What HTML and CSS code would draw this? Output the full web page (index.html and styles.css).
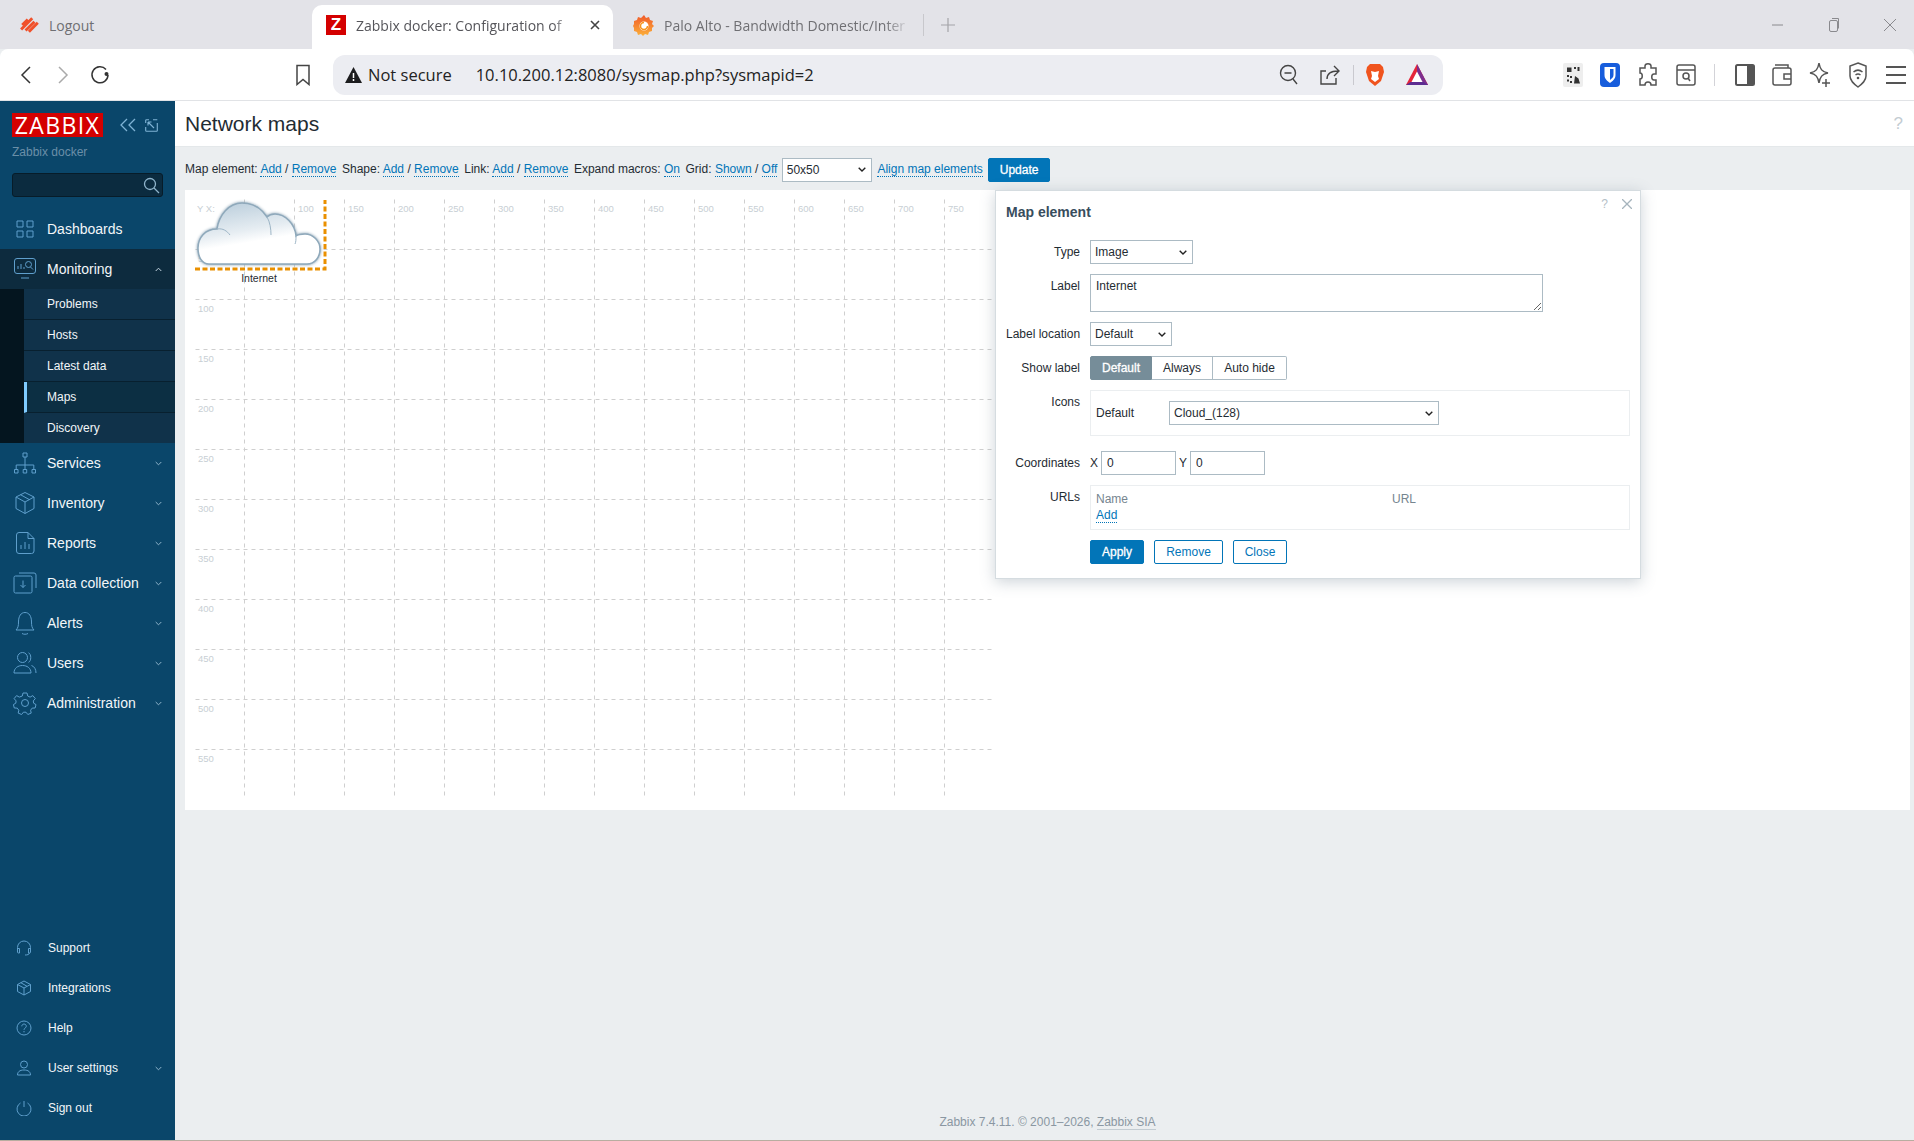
FILE: index.html
```html
<!DOCTYPE html>
<html lang="en">

<head>
  <meta charset="UTF-8" />
  <title>Zabbix docker: Configuration of network maps</title>
  <link rel="stylesheet" href="styles.css">
</head>

<body>
  <div class="tabbar">
    <div class="tab">
      <svg class="tab-icon" width="20" height="20" viewBox="0 0 18 18"><path d="M2 9l5-5M1 13l10-10M5 14l8-8M8 15l8-8" fill="none" stroke="#f0512b" stroke-width="2.6"/></svg>
      <span class="tab-text">Logout</span>
    </div>
    <div class="tab tab-active">
      <span class="tab-z">Z</span>
      <span class="tab-text fade">Zabbix docker: Configuration of</span>
      <svg class="tab-close" width="12" height="12" viewBox="0 0 12 12"><path d="M2 2l8 8M10 2l-8 8" stroke="#444" stroke-width="1.6"/></svg>
    </div>
    <div class="tab tab-last">
      <svg class="tab-icon" width="22" height="22" viewBox="0 0 22 22">
        <defs>
          <linearGradient id="grafana" x1="0" y1="0" x2="0" y2="1">
            <stop offset="0" stop-color="#f15a29" />
            <stop offset="1" stop-color="#fbb03b" />
          </linearGradient>
        </defs>
        <path d="M11 1l2 3 3-1 1 3 3 1-1 3 2 2-2 2 0 3-3 1-1 3-3-1-2 2-2-2-3 1-1-3-3-1 0-3-1-2 1-2 0-3 3-1 1-3 3 1z" fill="url(#grafana)"/>
        <circle cx="11" cy="12" r="4.500" fill="#fff"/>
        <path d="M11 8.500a3.500 3.500 0 1 0 3.500 3.500" fill="none" stroke="#f7941d" stroke-width="1.500"/>
      </svg>
      <span class="tab-text fade">Palo Alto - Bandwidth Domestic/Inter</span>
    </div>
    <svg class="new-tab" width="14" height="14" viewBox="0 0 14 14"><path d="M7 0v14M0 7h14" stroke="#a4a4a8" stroke-width="1.200"/></svg>
    <div class="window-controls">
      <svg width="14" height="14" viewBox="0 0 14 14"><path d="M1 7h11" stroke="#8a8a8e"/></svg>
      <svg width="14" height="16" viewBox="0 0 14 16"><rect x="2.500" y="3.500" width="8" height="11" rx="1.500" fill="none" stroke="#8a8a8e"/><path d="M5 1.500h6.500v10" fill="none" stroke="#8a8a8e"/></svg>
      <svg width="14" height="14" viewBox="0 0 14 14"><path d="M1 1l12 12M13 1L1 13" stroke="#8a8a8e"/></svg>
    </div>
  </div>

  <div class="toolbar">
    <div class="nav-buttons">
      <svg width="14" height="20" viewBox="0 0 14 20"><path d="M11 2L3 10l8 8" fill="none" stroke="#333" stroke-width="1.500"/></svg>
      <svg width="14" height="20" viewBox="0 0 14 20"><path d="M3 2l8 8-8 8" fill="none" stroke="#aaa" stroke-width="1.500"/></svg>
      <svg class="reload" width="22" height="22" viewBox="0 0 22 22"><path d="M17 5.500A8 8 0 1 0 19 11" fill="none" stroke="#333" stroke-width="1.500"/><circle cx="17.500" cy="10" r="2" fill="#333"/></svg>
    </div>
    <svg class="bookmark" width="16" height="22" viewBox="0 0 16 22"><path d="M2 1.500h12v19l-6-5-6 5z" fill="none" stroke="#444" stroke-width="1.500"/></svg>
    <div class="address">
      <svg width="17" height="16" viewBox="0 0 17 16"><path d="M8.500 0L17 16H0z" fill="#1c1c1e"/><path d="M8.500 6v5M8.500 12v2" stroke="#fff" stroke-width="1.500"/></svg>
      <span class="not-secure">Not secure</span>
      <span class="url">10.10.200.12:8080/sysmap.php?sysmapid=2</span>
      <div class="address-icons">
        <svg width="20" height="22" viewBox="0 0 20 22"><circle cx="9" cy="9" r="7.500" fill="none" stroke="#444" stroke-width="1.400"/><path d="M5.500 9h7M14 15l4 5" stroke="#444" stroke-width="1.400"/></svg>
        <svg width="22" height="22" viewBox="0 0 22 22"><path d="M7 7H2v13h15v-6M8 15c0-5 4-8 11-8M15 2l5 5-5 5" fill="none" stroke="#444" stroke-width="1.400"/></svg>
        <span class="address-sep"></span>
        <svg width="20" height="24" viewBox="0 0 20 24"><path d="M5 1h10l3 3 1 5-3 9-6 5-6-5-3-9 1-5z" fill="#f0541e"/><path d="M6 8l4 1 4-1-1 5 1 3-4 3-4-3 1-3z" fill="#fff"/></svg>
        <svg width="24" height="24" viewBox="0 0 24 24"><path d="M12 1L23 22H1z" fill="#e5253a"/><path d="M12 1L23 22H12z" fill="#7c2e8e"/><path d="M1 22l4.500-3h13l4.500 3z" fill="#5c2d91"/><path d="M12 8.500L17.500 19h-11z" fill="#fff"/></svg>
      </div>
    </div>
    <div class="extensions">
      <svg width="20" height="24" viewBox="0 0 20 24"><rect width="20" height="24" rx="2" fill="#eee"/><path d="M4 4.500h4.500v4.500H4zM11 4h2v2h-2zM14.500 4h2v4h-2zM4 12h2v2H4zM7 13h2v2H7zM4 16.500h2v2H4zM7 18h2v2H7zM12 13l3.500 2.500 1.500 5h-6z" fill="#333"/></svg>
      <svg width="20" height="24" viewBox="0 0 20 24"><rect width="20" height="24" rx="4" fill="#175ddc"/><path d="M4.500 4h11v8c0 4-3 6-5.500 8-2.500-2-5.500-4-5.500-8z" fill="#fff"/><path d="M10 6v11c2-1.500 3.500-3 3.500-5V6z" fill="#175ddc"/></svg>
      <svg width="22" height="24" viewBox="0 0 22 24"><path d="M8 3c0-3 6-3 6 0v2h5v6h-2c-3 0-3 6 0 6h2v5h-5c0-4-6-4-6 0H3v-6c3 0 3-6 0-6V5h5z" fill="none" stroke="#555" stroke-width="1.500"/></svg>
      <svg width="20" height="24" viewBox="0 0 20 24"><rect x="1" y="2" width="18" height="20" rx="2" fill="none" stroke="#555" stroke-width="1.500"/><path d="M1 7h18" stroke="#555" stroke-width="1.500"/><circle cx="10" cy="13" r="3" fill="none" stroke="#555" stroke-width="1.500"/><path d="M12 15l2 3" stroke="#555" stroke-width="1.500"/></svg>
      <span class="ext-sep"></span>
      <svg width="20" height="24" viewBox="0 0 20 24"><rect x="1" y="2" width="18" height="20" rx="1.500" fill="none" stroke="#555" stroke-width="2"/><rect x="12" y="2" width="7" height="20" fill="#555"/></svg>
      <svg width="20" height="24" viewBox="0 0 20 24"><path d="M17 5H3a2 2 0 0 0-2 2v13a2 2 0 0 0 2 2h14a2 2 0 0 0 2-2V7a2 2 0 0 0-2-2zM3 2h13v3" fill="none" stroke="#555" stroke-width="1.500"/><path d="M19 11h-7v5h7" fill="none" stroke="#555" stroke-width="1.500"/></svg>
      <svg width="22" height="26" viewBox="0 0 22 26"><path d="M10 1c1 6 3 9 9 10-6 1-8 4-9 10-1-6-3-9-9-10 6-1 8-4 9-10z" fill="none" stroke="#555" stroke-width="1.500"/><path d="M17 17v8M13 21h8" stroke="#555" stroke-width="1.500"/></svg>
      <svg width="20" height="26" viewBox="0 0 20 26"><path d="M10 1l8 3v10c0 5-4 8-8 11-4-3-8-6-8-11V4z" fill="none" stroke="#555" stroke-width="1.500"/><path d="M5.500 10c3-2.500 6-2.500 9 0M7.500 13c2-1.500 3-1.500 5 0" fill="none" stroke="#555" stroke-width="1.500"/><circle cx="10" cy="16" r="1.300" fill="#555"/></svg>
      <svg width="22" height="20" viewBox="0 0 22 20"><path d="M1 2h20M1 10h20M1 18h20" stroke="#555" stroke-width="2"/></svg>
    </div>
  </div>

  <div class="app">
    <aside class="sidebar">
      <div class="logo-row">
        <span class="logo">ZABBIX</span>
        <svg class="logo-icon" width="16" height="14" viewBox="0 0 16 14"><path d="M7 1L1 7l6 6M15 1L9 7l6 6" fill="none" stroke="#7fb3d5" stroke-width="1.300"/></svg>
        <svg class="logo-icon" width="13" height="13" viewBox="0 0 13 13"><path d="M4 .7H1.500a.8.8 0 0 0-.8.800V4M.7 8v3.500a.8.8 0 0 0 .8.800h10a.8.8 0 0 0 .8-.8V4M8 .7h4.300M3 3l6 6M3 3h3.500M3 3v3.500" fill="none" stroke="#7fb3d5" stroke-width="1.100"/></svg>
      </div>
      <div class="server-name">Zabbix docker</div>
      <div class="search">
        <svg width="17" height="17" viewBox="0 0 17 17"><circle cx="7" cy="7" r="5.500" fill="none" stroke="#8fb4cb" stroke-width="1.300"/><path d="M11 11l5 5" stroke="#8fb4cb" stroke-width="1.300"/></svg>
      </div>

      <nav class="menu">
        <a class="item">
          <svg class="item-icon" width="24" height="24" viewBox="0 0 24 24"><path d="M4 3h6v6H4zM14 3h6v6h-6zM4 13h6v6H4zM14 13h6v6h-6z" transform="translate(0 1)" fill="none" stroke="#5f9fcc"/></svg>
          <span>Dashboards</span>
        </a>
        <a class="item item-open">
          <svg class="item-icon" width="24" height="24" viewBox="0 0 24 24"><rect x="1.500" y="1.500" width="21" height="15" rx="2.500" fill="none" stroke="#5f9fcc"/><path d="M8 21h8M5 12V9M8 12V7M11 12v-2" stroke="#5f9fcc"/><circle cx="15.500" cy="7.500" r="3" fill="none" stroke="#5f9fcc"/><path d="M17.500 10l2.500 2.500" stroke="#5f9fcc"/></svg>
          <span>Monitoring</span>
          <svg class="chevron" width="7" height="5" viewBox="0 0 7 5"><path d="M.7 4l2.800-2.800L6.300 4" fill="none" stroke="#c5d6e2"/></svg>
        </a>
        <ul class="submenu">
          <li>Problems</li>
          <li>Hosts</li>
          <li>Latest data</li>
          <li class="current">Maps</li>
          <li>Discovery</li>
        </ul>
        <a class="item">
          <svg class="item-icon" width="24" height="24" viewBox="0 0 24 24"><path d="M10 2h4v4h-4zM1.500 18.500h3.500V22H1.500zM10.200 18.500h3.500V22h-3.500zM19 18.500h3.500V22H19zM12 6v12.500M3.200 18.500V14h17.600v4.500" fill="none" stroke="#5f9fcc"/></svg>
          <span>Services</span>
          <svg class="chevron" width="7" height="5" viewBox="0 0 7 5"><path d="M.7 1l2.800 2.800L6.300 1" fill="none" stroke="#8fb4cb"/></svg>
        </a>
        <a class="item">
          <svg class="item-icon" width="24" height="24" viewBox="0 0 24 24"><path d="M12 1.500l9 4.500v11.500l-9 5-9-5V6zM3 6l9 5 9-5M12 11v11.500M7.500 3.700l9 5" fill="none" stroke="#5f9fcc"/></svg>
          <span>Inventory</span>
          <svg class="chevron" width="7" height="5" viewBox="0 0 7 5"><path d="M.7 1l2.800 2.800L6.300 1" fill="none" stroke="#8fb4cb"/></svg>
        </a>
        <a class="item">
          <svg class="item-icon" width="24" height="24" viewBox="0 0 24 24"><path d="M6 1.500h9l6 6V20a2.500 2.500 0 0 1-2.500 2.500h-12.500A2.500 2.500 0 0 1 3.500 20V4A2.500 2.500 0 0 1 6 1.500zM15 1.500v6h6M8 18v-4M12 18v-7M16 18v-5" fill="none" stroke="#5f9fcc"/></svg>
          <span>Reports</span>
          <svg class="chevron" width="7" height="5" viewBox="0 0 7 5"><path d="M.7 1l2.800 2.800L6.300 1" fill="none" stroke="#8fb4cb"/></svg>
        </a>
        <a class="item">
          <svg class="item-icon" width="24" height="24" viewBox="0 0 24 24"><rect x="1" y="5" width="18" height="17" rx="1.500" fill="none" stroke="#5f9fcc"/><path d="M6 2h15a2 2 0 0 1 2 2v13M10 9.500v7M7.500 14l2.500 2.500 2.500-2.500" fill="none" stroke="#5f9fcc"/></svg>
          <span>Data collection</span>
          <svg class="chevron" width="7" height="5" viewBox="0 0 7 5"><path d="M.7 1l2.800 2.800L6.300 1" fill="none" stroke="#8fb4cb"/></svg>
        </a>
        <a class="item">
          <svg class="item-icon" width="24" height="24" viewBox="0 0 24 24"><path d="M3 19c2-2 2.500-4 2.500-8C5.500 5 8 1.500 12 1.500s6.500 3.500 6.500 9.500c0 4 .5 6 2.500 8zM9 22.500c2 1 4 1 6 0" fill="none" stroke="#5f9fcc"/></svg>
          <span>Alerts</span>
          <svg class="chevron" width="7" height="5" viewBox="0 0 7 5"><path d="M.7 1l2.800 2.800L6.300 1" fill="none" stroke="#8fb4cb"/></svg>
        </a>
        <a class="item">
          <svg class="item-icon" width="24" height="24" viewBox="0 0 24 24"><circle cx="9.500" cy="6.500" r="5" fill="none" stroke="#5f9fcc"/><path d="M1 22c0-5 4-7.500 8.500-7.500S18 17 18 22zM15.500 1.800c3 1 3 8.500 0 9.500M18.500 14.500c3 1 4.500 4 4.500 7.500" fill="none" stroke="#5f9fcc"/></svg>
          <span>Users</span>
          <svg class="chevron" width="7" height="5" viewBox="0 0 7 5"><path d="M.7 1l2.800 2.800L6.300 1" fill="none" stroke="#8fb4cb"/></svg>
        </a>
        <a class="item">
          <svg class="item-icon" width="24" height="24" viewBox="0 0 24 24"><circle cx="12" cy="12" r="3.500" fill="none" stroke="#5f9fcc"/><path d="M10 2h4l.7 3 2.400 1.100 2.700-1.500 2.500 3-2 2.300.3 2.300 2.400 1.400-.9 3.400-2.900.1-1.600 2.100.6 2.900-3.400 1.400-1.800-2.300h-2.600l-1.800 2.300-3.400-1.400.6-2.900-1.600-2.100-2.900-.1-.9-3.400 2.400-1.400.3-2.300-2-2.300 2.500-3 2.700 1.500L9.300 5z" fill="none" stroke="#5f9fcc"/></svg>
          <span>Administration</span>
          <svg class="chevron" width="7" height="5" viewBox="0 0 7 5"><path d="M.7 1l2.800 2.800L6.300 1" fill="none" stroke="#8fb4cb"/></svg>
        </a>
      </nav>

      <nav class="menu-bottom">
        <a class="item item-small">
          <svg class="item-icon" width="16" height="16" viewBox="0 0 16 16"><path d="M1.500 10V7.500a6.500 6.500 0 0 1 13 0V10M1.500 8.500h2v4.500h-1a1 1 0 0 1-1-1zM14.500 8.500h-2v4.500h1a1 1 0 0 0 1-1zM13.500 13c-.5 1.500-2 2-4.500 2" fill="none" stroke="#5f9fcc"/></svg>
          <span>Support</span>
        </a>
        <a class="item item-small">
          <svg class="item-icon" width="16" height="16" viewBox="0 0 16 16"><path d="M8 1l6.500 3.500v7L8 15l-6.500-3.500v-7zM1.500 4.500L8 8l6.500-3.500M8 8v7M4.800 2.700L11 6.300" fill="none" stroke="#5f9fcc"/></svg>
          <span>Integrations</span>
        </a>
        <a class="item item-small">
          <svg class="item-icon" width="16" height="16" viewBox="0 0 16 16"><circle cx="8" cy="8" r="7" fill="none" stroke="#5f9fcc"/><path d="M5.800 6.300c0-3 4.500-3 4.500 0 0 1.700-2.300 1.700-2.300 3.500M8 11v1.300" fill="none" stroke="#5f9fcc"/></svg>
          <span>Help</span>
        </a>
        <a class="item item-small">
          <svg class="item-icon" width="16" height="16" viewBox="0 0 16 16"><circle cx="8" cy="4.500" r="3.500" fill="none" stroke="#5f9fcc"/><path d="M1.500 15c0-3 2-5 6.500-5s6.500 2 6.500 5z" fill="none" stroke="#5f9fcc"/></svg>
          <span>User settings</span>
          <svg class="chevron" width="7" height="5" viewBox="0 0 7 5"><path d="M.7 1l2.800 2.800L6.300 1" fill="none" stroke="#8fb4cb"/></svg>
        </a>
        <a class="item item-small">
          <svg class="item-icon" width="16" height="16" viewBox="0 0 16 16"><path d="M8 1v6M4.500 3a7 7 0 1 0 7 0" fill="none" stroke="#5f9fcc"/></svg>
          <span>Sign out</span>
        </a>
      </nav>
    </aside>

    <main class="content">
      <header class="page-header">
        <h1>Network maps</h1>
        <span class="page-help">?</span>
      </header>

      <div class="map-tools">
        <span class="tool">Map element:</span> <a class="link">Add</a> / <a class="link">Remove</a>
        <span class="tool">Shape:</span> <a class="link">Add</a> / <a class="link">Remove</a>
        <span class="tool">Link:</span> <a class="link">Add</a> / <a class="link">Remove</a>
        <span class="tool">Expand macros:</span> <a class="link">On</a>
        <span class="tool">Grid:</span> <a class="link">Shown</a> / <a class="link">Off</a>
        <select class="field grid-size"><option>50x50</option></select>
        <a class="link">Align map elements</a>
        <button class="btn btn-update">Update</button>
      </div>

      <section class="map-card">
        <svg class="map" width="800" height="600" viewBox="0 0 800 600">
          <defs>
            <linearGradient id="cloudFill" x1="0.35" y1="0" x2="0.6" y2="0.75">
              <stop offset="0" stop-color="#bfd1de" />
              <stop offset="0.55" stop-color="#e6edf2" />
              <stop offset="0.8" stop-color="#ffffff" />
            </linearGradient>
          </defs>
          <path class="grid" transform="translate(.5 .5)" d="M50 0V600M100 0V600M150 0V600M200 0V600M250 0V600M300 0V600M350 0V600M400 0V600M450 0V600M500 0V600M550 0V600M600 0V600M650 0V600M700 0V600M750 0V600M1 50H798M1 100H798M1 150H798M1 200H798M1 250H798M1 300H798M1 350H798M1 400H798M1 450H798M1 500H798M1 550H798" />
          <g class="axis">
            <text x="3" y="13">Y X:</text>
            <text x="54" y="13">50</text><text x="104" y="13">100</text><text x="154" y="13">150</text><text x="204" y="13">200</text><text x="254" y="13">250</text><text x="304" y="13">300</text><text x="354" y="13">350</text><text x="404" y="13">400</text><text x="454" y="13">450</text><text x="504" y="13">500</text><text x="554" y="13">550</text><text x="604" y="13">600</text><text x="654" y="13">650</text><text x="704" y="13">700</text><text x="754" y="13">750</text>
            <text x="4" y="63">50</text><text x="4" y="113">100</text><text x="4" y="163">150</text><text x="4" y="213">200</text><text x="4" y="263">250</text><text x="4" y="313">300</text><text x="4" y="363">350</text><text x="4" y="413">400</text><text x="4" y="463">450</text><text x="4" y="513">500</text><text x="4" y="563">550</text>
          </g>
          <path class="cloud" d="M15 65H113C121 65 126 58 126 50C126 42 119 35 111 35C107 35 104 35.500 102 37C101 25 91 15 81 15C78 15 75 16 73 18C67 9 58 4 48 4C35 4 25 16 23 30C11 30 4 39 4 49C4 58 8 65 15 65Z" />
          <path class="cloud-line" d="M73 18C76 23 77 30 77 36M23 30C29 29 33 32 36 36M102 37C102 40 102 43 101 45" />
          <path class="selected" d="M1 70H131V1" />
          <text class="map-label" x="65" y="83" text-anchor="middle">Internet</text>
        </svg>
      </section>

      <div class="dialog">
        <div class="dialog-head">
          <h4>Map element</h4>
          <span class="dialog-help">?</span>
          <svg width="10" height="10" viewBox="0 0 10 10"><path d="M0 0l10 10M10 0L0 10" stroke="#a6b4bd" stroke-width="1.300"/></svg>
        </div>
        <form class="form">
          <label>Type</label>
          <div><select class="field type-select"><option>Image</option></select></div>

          <label>Label</label>
          <div><textarea class="field label-input">Internet</textarea></div>

          <label>Label location</label>
          <div><select class="field location-select"><option>Default</option></select></div>

          <label>Show label</label>
          <div class="segments">
            <span class="segment segment-on">Default</span>
            <span class="segment seg-always">Always</span>
            <span class="segment seg-hide">Auto hide</span>
          </div>

          <label>Icons</label>
          <div class="box icons-box">
            <span class="icons-name">Default</span>
            <select class="field icon-select"><option>Cloud_(128)</option></select>
          </div>

          <label class="after-box">Coordinates</label>
          <div class="coords after-box">
            <span>X</span><input class="field coord" value="0" />
            <span>Y</span><input class="field coord" value="0" />
          </div>

          <label>URLs</label>
          <div class="box urls-box">
            <div class="urls-head"><span class="urls-name">Name</span><span>URL</span></div>
            <a class="link">Add</a>
          </div>

          <span></span>
          <div class="dialog-buttons">
            <button type="button" class="btn btn-apply">Apply</button>
            <button type="button" class="btn btn-alt btn-remove">Remove</button>
            <button type="button" class="btn btn-alt btn-close">Close</button>
          </div>
        </form>
      </div>

      <footer class="footer">Zabbix 7.4.11. © 2001–2026, <a class="footer-link">Zabbix SIA</a></footer>
    </main>
  </div>
</body>

</html>
```

FILE: styles.css
```css
:root {
  --chrome: #e3e3e8;
  --sidebar: #0a466a;
  --page: #ebeef0;
  --blue: #0275b8;
  --border: #acbbc4;
  --text: #1f2c33;
}

* {
  box-sizing: border-box;
}

html,
body {
  margin: 0;
  height: 1141px;
  overflow: hidden;
}

body {
  font-family: "Liberation Sans", Arial, sans-serif;
  font-size: 12px;
  color: var(--text);
  background: var(--page);
}

/* browser chrome */
.tabbar {
  display: flex;
  align-items: flex-end;
  height: 49px;
  background: var(--chrome);
  font-family: "Open Sans", sans-serif;
  font-size: 14px;
  color: #6f6f73;
}

.tab {
  display: flex;
  align-items: center;
  height: 44px;
  padding: 0 0 4px 20px;
  width: 312px;
}

.tab-icon {
  margin-right: 9px;
  flex: none;
}

.tab-active {
  width: 301px;
  background: #fff;
  border-radius: 10px 10px 0 0;
  padding-left: 14px;
  color: #55555a;
}

.tab-z {
  flex: none;
  width: 20px;
  height: 20px;
  background: #d40000;
  color: #fff;
  font-family: "Liberation Sans", sans-serif;
  font-weight: bold;
  font-size: 17px;
  line-height: 20px;
  text-align: center;
  margin-right: 10px;
}

.tab-text {
  white-space: nowrap;
}

.fade {
  -webkit-mask-image: linear-gradient(90deg, #000 90%, transparent 100%);
  mask-image: linear-gradient(90deg, #000 90%, transparent 100%);
}

.tab-active .tab-text {
  width: 219px;
}

.tab-close {
  flex: none;
  margin-left: 14px;
}

.tab-last .tab-text {
  width: 246px;
}

.tab-last::after {
  content: "";
  width: 1px;
  height: 22px;
  margin-left: 13px;
  background: #c8c8cc;
}

.new-tab {
  margin: 0 0 17px 16px;
}

.window-controls {
  display: flex;
  align-items: center;
  gap: 42px;
  margin: 0 17px 16px auto;
}

.toolbar {
  display: flex;
  align-items: center;
  height: 52px;
  background: #fff;
  border-bottom: 1px solid #e1e3e6;
  border-radius: 8px 8px 0 0;
  padding: 1px 7px 0 19px;
}

.nav-buttons {
  display: flex;
  align-items: center;
  gap: 23px;
  width: 276px;
}

.reload {
  margin-left: -4px;
}

.bookmark {
  flex: none;
}

.address {
  display: flex;
  align-items: center;
  width: 1110px;
  height: 40px;
  margin-left: 22px;
  padding: 0 14px 0 12px;
  background: #ecedf2;
  border-radius: 12px;
  font-family: "Open Sans", sans-serif;
  font-size: 16.500px;
  color: #222;
}

.not-secure {
  margin-left: 6px;
  padding-bottom: 2px;
}

.url {
  margin-left: 24px;
  padding-bottom: 2px;
}

.address-icons {
  display: flex;
  align-items: center;
  gap: 20px;
  margin-left: auto;
}

.address-sep {
  width: 1px;
  height: 20px;
  background: #c9c9cf;
  margin: 0 -8.500px;
}

.extensions {
  display: flex;
  align-items: center;
  gap: 17px;
  margin-left: auto;
}

.ext-sep {
  width: 1px;
  height: 22px;
  background: #d3d3d8;
  margin: 0 3px 0 1px;
}

/* app */
.app {
  display: flex;
  height: 1040px;
  border-bottom: 1px solid #b8ada0;
}

.sidebar {
  display: flex;
  flex-direction: column;
  flex: none;
  width: 175px;
  background: var(--sidebar);
  color: #f2f6f9;
}

.logo-row {
  display: flex;
  align-items: center;
  padding: 12px 0 0 12px;
}

.logo {
  width: 91px;
  height: 24px;
  background: #d40000;
  color: #fff;
  font-family: "Open Sans", sans-serif;
  font-size: 23px;
  line-height: 24px;
  text-align: center;
  letter-spacing: 1.400px;
}

.logo-icon {
  margin-left: 17px;
}

.logo-icon + .logo-icon {
  margin-left: 9px;
}

.server-name {
  margin: 8px 0 0 12px;
  line-height: 14px;
  color: #6a8fa8;
}

.search {
  display: flex;
  align-items: center;
  justify-content: flex-end;
  height: 24px;
  margin: 14px 12px 12px;
  padding-right: 2px;
  background: #0b2b3f;
  border: 1px solid #071c29;
  border-radius: 3px;
}

.item {
  display: flex;
  align-items: center;
  height: 40px;
  padding-left: 13px;
  font-size: 14px;
}

.item-icon {
  flex: none;
  margin-right: 10px;
}

.item-open {
  background: #0d2b3e;
}

.chevron {
  margin: 0 13px 0 auto;
}

.item-small {
  padding-left: 16px;
  font-size: 12px;
}

.item-small .item-icon {
  margin-right: 16px;
}

.submenu {
  list-style: none;
  margin: 0;
  padding: 0 0 0 24px;
  background: #04151f;
}

.submenu li {
  height: 31px;
  padding-left: 23px;
  line-height: 30px;
  background: #10324a;
  border-bottom: 1px solid #08202f;
}

.submenu li:last-child {
  height: 30px;
  border-bottom: 0;
}

.submenu .current {
  background: #0c2f43;
  border-left: 3px solid #7fcbff;
  padding-left: 20px;
}

.menu-bottom {
  margin-top: auto;
  padding-bottom: 12px;
}

.content {
  position: relative;
  display: flex;
  flex-direction: column;
  flex: 1;
}

.page-header {
  display: flex;
  align-items: center;
  justify-content: space-between;
  height: 46px;
  padding: 0 11px 0 10px;
  background: #fff;
  border-bottom: 1px solid #e4e8ea;
}

h1 {
  margin: 0;
  font-size: 21px;
  font-weight: normal;
  color: #1f2c33;
}

.page-help {
  font-size: 17px;
  color: #c3ccd2;
}

.map-tools {
  height: 43px;
  padding-left: 10px;
  line-height: 44px;
  white-space: nowrap;
}

.tool {
  margin-left: 2.200px;
}

.tool:first-child {
  margin-left: 0;
}

.link {
  color: var(--blue);
  border-bottom: 1px dotted var(--blue);
}

.field {
  border: 1px solid var(--border);
  background: #fff;
  font-family: "Liberation Sans", Arial, sans-serif;
  font-size: 12px;
  color: var(--text);
  border-radius: 0;
  outline: none;
}

select.field,
input.field {
  height: 24px;
}

select.field {
  appearance: none;
  padding: 0 20px 0 4px;
  background: #fff url("data:image/svg+xml,%3Csvg xmlns='http://www.w3.org/2000/svg' width='8' height='5'%3E%3Cpath d='M.7.7L4 4 7.300.7' fill='none' stroke='%23222' stroke-width='1.400'/%3E%3C/svg%3E") no-repeat right 5px center;
}

.grid-size {
  width: 90px;
  margin: 0 3px 0 1px;
  vertical-align: middle;
}

.btn {
  height: 24px;
  border: 1px solid var(--blue);
  border-radius: 2px;
  background: var(--blue);
  color: #fff;
  font-family: "Liberation Sans", Arial, sans-serif;
  font-size: 12px;
  padding: 0;
}

.btn-update {
  width: 62px;
  margin-left: 2px;
  -webkit-text-stroke: 0.3px #fff;
  vertical-align: middle;
}

.btn-alt {
  background: #fff;
  color: var(--blue);
}

.map-card {
  height: 620px;
  margin: 0 4px 0 10px;
  padding: 9px;
  background: #fff;
}

.map {
  display: block;
}

.grid {
  fill: none;
  stroke: #cfcfcf;
  stroke-dasharray: 4 4;
}

.axis {
  font-size: 9.500px;
  fill: #c8cfd4;
}

.cloud {
  fill: url(#cloudFill);
  stroke: #8fa9bb;
  stroke-width: 1.500;
  filter: drop-shadow(0 0 1.500px #7d99ad);
}

.cloud-line {
  fill: none;
  stroke: #9db5c6;
}

.selected {
  fill: none;
  stroke: #ea9000;
  stroke-width: 3;
  stroke-dasharray: 5 2.500;
}

.map-label {
  font-size: 10.500px;
  fill: #1f2c33;
}

/* map element form */
.dialog {
  position: absolute;
  top: 89px;
  left: 820px;
  width: 646px;
  height: 389px;
  padding: 0 10px;
  background: #fff;
  border: 1px solid #d5dce0;
  box-shadow: 0 3px 14px rgba(90, 110, 125, 0.3);
}

.dialog-head {
  display: flex;
  align-items: center;
  height: 49px;
  color: #b5c0c7;
  padding-bottom: 8px;
}

h4 {
  margin: 0 auto 0 0;
  font-size: 14px;
  line-height: 14px;
  color: #384d5d;
}

.dialog-help {
  font-size: 12px;
  margin: -16px 14px 0 0;
}

.dialog-head svg {
  margin: -16px -2px 0 0;
}

.form {
  display: grid;
  grid-template-columns: 74px 540px;
  column-gap: 10px;
  row-gap: 10px;
}

.form label {
  line-height: 24px;
  text-align: right;
  white-space: nowrap;
}

.type-select {
  display: block;
  width: 103px;
}

.label-input {
  display: block;
  width: 453px;
  height: 38px;
  padding: 4px 5px;
  line-height: 14px;
}

.location-select {
  display: block;
  width: 82px;
}

.segments {
  display: flex;
  height: 24px;
  line-height: 22px;
  text-align: center;
}

.segment {
  border: 1px solid var(--border);
  border-left: 0;
}

.segment-on {
  width: 62px;
  background: #768d99;
  border: 1px solid #768d99;
  border-radius: 2px 0 0 2px;
  color: #fff;
  -webkit-text-stroke: 0.3px #fff;
}

.seg-always {
  width: 61px;
}

.seg-hide {
  width: 74px;
  border-radius: 0 2px 2px 0;
}

.box {
  border: 1px solid #ebeef0;
}

.icons-box {
  display: flex;
  align-items: center;
  height: 46px;
  padding-left: 5px;
}

.icons-name {
  width: 73px;
}

.icon-select {
  width: 270px;
}

.after-box {
  margin-top: 5px;
}

.coords {
  display: flex;
  align-items: center;
  height: 24px;
}

.coord {
  width: 75px;
  padding: 0 5px;
  margin: 0 3px;
}

.urls-box {
  height: 45px;
  padding: 6px 5px 0;
  line-height: 14px;
}

.urls-head {
  display: flex;
  color: #76858f;
  margin-bottom: 2px;
}

.urls-name {
  width: 296px;
}

.dialog-buttons {
  display: flex;
  gap: 10px;
}

.btn-apply {
  width: 54px;
  -webkit-text-stroke: 0.3px #fff;
}

.btn-remove {
  width: 69px;
}

.btn-close {
  width: 54px;
}

.footer {
  margin-top: auto;
  padding: 0 0 11px 6px;
  text-align: center;
  line-height: 14px;
  color: #8a97a2;
}

.footer-link {
  border-bottom: 1px solid #c3ccd2;
}
```
